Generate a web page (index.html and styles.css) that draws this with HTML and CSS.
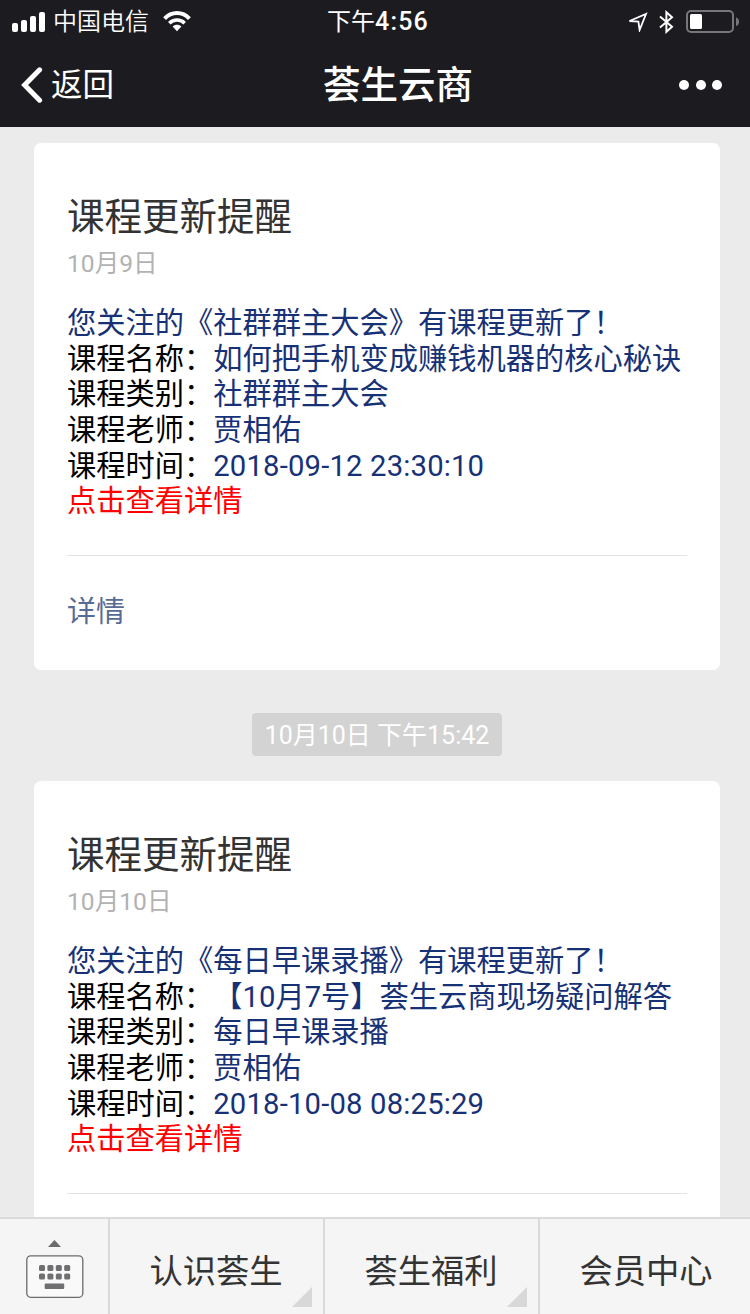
FILE: index.html
```html
<!DOCTYPE html>
<html lang="zh-CN">
<head>
    <meta charset="UTF-8">
    <meta name="viewport" content="width=device-width, initial-scale=1.0">
    <title>荟生云商</title>
    <link rel="stylesheet" href="styles.css">
</head>
<body>
    <div class="screen">
        <header class="header">
            <div class="status-bar">
                <div class="status-left">
                    <svg class="signal" width="34" height="20" viewBox="0 0 34 20" fill="#fff">
                        <rect x="0" y="11" width="6" height="9" rx="2"/>
                        <rect x="9" y="8" width="6" height="12" rx="2"/>
                        <rect x="18" y="4" width="6" height="16" rx="2"/>
                        <rect x="27" y="0" width="6" height="20" rx="2"/>
                    </svg>
                    <span class="carrier">中国电信</span>
                    <svg class="wifi" width="28" height="21" viewBox="0 0 28 21">
                        <path d="M1.6 7.6 C8.4 0.2 19.6 0.2 26.4 7.6" fill="none" stroke="#fff" stroke-width="3.9"/>
                        <path d="M6.3 12.2 C10.5 7.9 17.5 7.9 21.7 12.2" fill="none" stroke="#fff" stroke-width="3.5"/>
                        <path d="M9.6 15.6 C12 13.1 16 13.1 18.4 15.6 L14 20.2 Z" fill="#fff"/>
                    </svg>
                </div>
                <div class="time">下午<span>4:56</span></div>
                <div class="status-right">
                    <svg class="location" width="21" height="20" viewBox="0 0 21 20">
                        <path d="M2.5 9 L19 2 L12.6 18 L11.4 9.6 Z" fill="none" stroke="#fff" stroke-width="1.8"/>
                    </svg>
                    <svg class="bluetooth" width="15" height="24" viewBox="0 0 15 24">
                        <path d="M1 6.6 L13 16.8 L7.4 21.8 V2.2 L13 7.2 L1 17.4" fill="none" stroke="#fff" stroke-width="2"/>
                    </svg>
                    <svg class="battery" width="54" height="24" viewBox="0 0 54 24">
                        <rect x="1" y="1" width="46" height="21" rx="4" fill="none" stroke="#77777a" stroke-width="2"/>
                        <rect x="4" y="4" width="12" height="15" rx="1.5" fill="#fff"/>
                        <path d="M50 7.5 C54 8.5 54 15 50 16 Z" fill="#77777a"/>
                    </svg>
                </div>
            </div>
            <div class="nav-bar">
                <a class="back" href="#">
                    <svg width="22" height="36" viewBox="0 0 22 36">
                        <path d="M18.6 2.8 L3.6 18 L18.6 33.2" fill="none" stroke="#fff" stroke-width="5" stroke-linecap="round" stroke-linejoin="miter"/>
                    </svg>
                    <span>返回</span>
                </a>
                <h1>荟生云商</h1>
                <div class="more">
                    <i></i>
                    <i></i>
                    <i></i>
                </div>
            </div>
        </header>

        <main class="messages">
            <div class="card">
                <h2>课程更新提醒</h2>
                <div class="date">10月9日</div>
                <div class="detail">
                    <p class="value">您关注的《社群群主大会》有课程更新了！</p>
                    <p>课程名称：<span class="value">如何把手机变成赚钱机器的核心秘诀</span></p>
                    <p>课程类别：<span class="value">社群群主大会</span></p>
                    <p>课程老师：<span class="value">贾相佑</span></p>
                    <p>课程时间：<span class="value datetime">2018-09-12 23:30:10</span></p>
                    <p class="remark">点击查看详情</p>
                </div>
                <a class="card-link" href="#">详情</a>
            </div>

            <div class="timestamp">10月10日 下午15:42</div>

            <div class="card">
                <h2>课程更新提醒</h2>
                <div class="date">10月10日</div>
                <div class="detail">
                    <p class="value">您关注的《每日早课录播》有课程更新了！</p>
                    <p>课程名称：<span class="value">【10月7号】荟生云商现场疑问解答</span></p>
                    <p>课程类别：<span class="value">每日早课录播</span></p>
                    <p>课程老师：<span class="value">贾相佑</span></p>
                    <p>课程时间：<span class="value datetime">2018-10-08 08:25:29</span></p>
                    <p class="remark">点击查看详情</p>
                </div>
            </div>
        </main>

        <footer class="menu">
            <div class="keyboard">
                <svg width="58" height="60" viewBox="0 0 58 60">
                    <path d="M22 8 L28.5 1 L35 8 Z" fill="#6b6b6b"/>
                    <rect x="0.8" y="16.8" width="56" height="41.5" rx="4" fill="#f9f9f9" stroke="#6b6b6b" stroke-width="1.3"/>
                    <g fill="#6f6f71">
                        <rect x="13" y="26" width="6" height="6" rx="1.5"/>
                        <rect x="21.4" y="26" width="6" height="6" rx="1.5"/>
                        <rect x="29.8" y="26" width="6" height="6" rx="1.5"/>
                        <rect x="38.2" y="26" width="6" height="6" rx="1.5"/>
                        <rect x="13" y="34.5" width="6" height="6" rx="1.5"/>
                        <rect x="21.4" y="34.5" width="6" height="6" rx="1.5"/>
                        <rect x="29.8" y="34.5" width="6" height="6" rx="1.5"/>
                        <rect x="38.2" y="34.5" width="6" height="6" rx="1.5"/>
                        <rect x="18.7" y="44.5" width="19.5" height="5.5" rx="1"/>
                    </g>
                </svg>
            </div>
            <a class="menu-item has-sub" href="#">认识荟生</a>
            <a class="menu-item has-sub" href="#">荟生福利</a>
            <a class="menu-item" href="#">会员中心</a>
        </footer>
    </div>
</body>
</html>
```
FILE: styles.css
```css
* {
    margin: 0;
    padding: 0;
    box-sizing: border-box;
}

body {
    font-family: Roboto, "Noto Sans CJK SC", sans-serif;
    background: #ebebeb;
    color: #000;
    text-spacing-trim: space-all;
}

a {
    text-decoration: none;
}

svg {
    display: block;
    flex-shrink: 0;
}

.screen {
    display: flex;
    flex-direction: column;
    height: 1314px;
    overflow: hidden;
}

/* Header */
.header {
    flex: none;
    height: 127px;
    background: #1c1b20;
    color: #fff;
}

.status-bar {
    display: grid;
    grid-template-columns: 1fr auto 1fr;
    align-items: center;
    height: 42px;
    padding: 0 10px 0 12px;
    font-size: 24px;
    line-height: 42px;
}

.status-left,
.status-right {
    display: flex;
    align-items: center;
}

.status-right {
    justify-content: flex-end;
}

.carrier {
    margin: 0 14px 0 7px;
    padding-top: 1px;
    font-weight: 350;
}

.time {
    padding-left: 4px;
    font-weight: 400;
}

.time span {
    font-size: 25px;
    font-weight: 500;
    letter-spacing: 1.2px;
}

.location {
    margin-right: 11px;
}

.bluetooth {
    margin-right: 12px;
}

.nav-bar {
    display: flex;
    align-items: center;
    height: 85px;
    padding: 0 28px 0 21px;
}

.back {
    display: flex;
    align-items: center;
    gap: 8px;
    width: 302px;
    color: #fff;
    font-size: 31.5px;
    line-height: 40px;
}

.back span {
    padding-top: 3px;
}

.nav-bar h1 {
    font-size: 37.5px;
    font-weight: 500;
    line-height: 50px;
}

.more {
    display: flex;
    gap: 6.5px;
    margin-left: auto;
}

.more i {
    width: 10px;
    height: 10px;
    border-radius: 50%;
    background: #fff;
}

/* Messages */
.messages {
    flex: 1;
    min-height: 0;
    overflow: hidden;
    padding: 16px 30px 0 34px;
}

.card {
    height: 527px;
    padding: 48px 33px 0;
    background: #fff;
    border-radius: 7px;
}

.card h2 {
    color: #333;
    font-size: 37.5px;
    font-weight: 400;
    line-height: 52px;
}

.date {
    margin-top: 3px;
    color: #b2b2b2;
    font-size: 24.6px;
    line-height: 36px;
}

.detail {
    margin-top: 24px;
    padding-bottom: 35px;
    border-bottom: 1px solid #e3e3e3;
    font-size: 29.25px;
    line-height: 35.67px;
    white-space: nowrap;
}

.value {
    color: #173177;
}

.datetime {
    letter-spacing: 0.17px;
}

.remark {
    color: #f00;
}

.card-link {
    display: block;
    margin-top: 35px;
    color: #576b95;
    font-size: 29px;
    line-height: 42px;
}

.timestamp {
    width: 250px;
    height: 43px;
    margin: 43px auto 25px;
    border-radius: 4px;
    background: #d3d3d3;
    color: #fff;
    font-size: 25px;
    line-height: 46px;
    text-align: center;
}

/* Bottom menu */
.menu {
    display: flex;
    flex: none;
    height: 97px;
    border-top: 2px solid #dadada;
    background: #f5f5f5;
}

.keyboard {
    flex: none;
    width: 107.5px;
    padding: 20px 0 0 26px;
}

.menu-item {
    position: relative;
    flex: 0 0 215px;
    border-left: 2px solid #dadada;
    color: #333;
    font-size: 33.3px;
    line-height: 105px;
    text-align: center;
}

.has-sub::after {
    content: "";
    position: absolute;
    right: 11px;
    bottom: 7px;
    border-style: solid;
    border-width: 0 0 20px 20px;
    border-color: transparent transparent #d8d8d8;
}
```
